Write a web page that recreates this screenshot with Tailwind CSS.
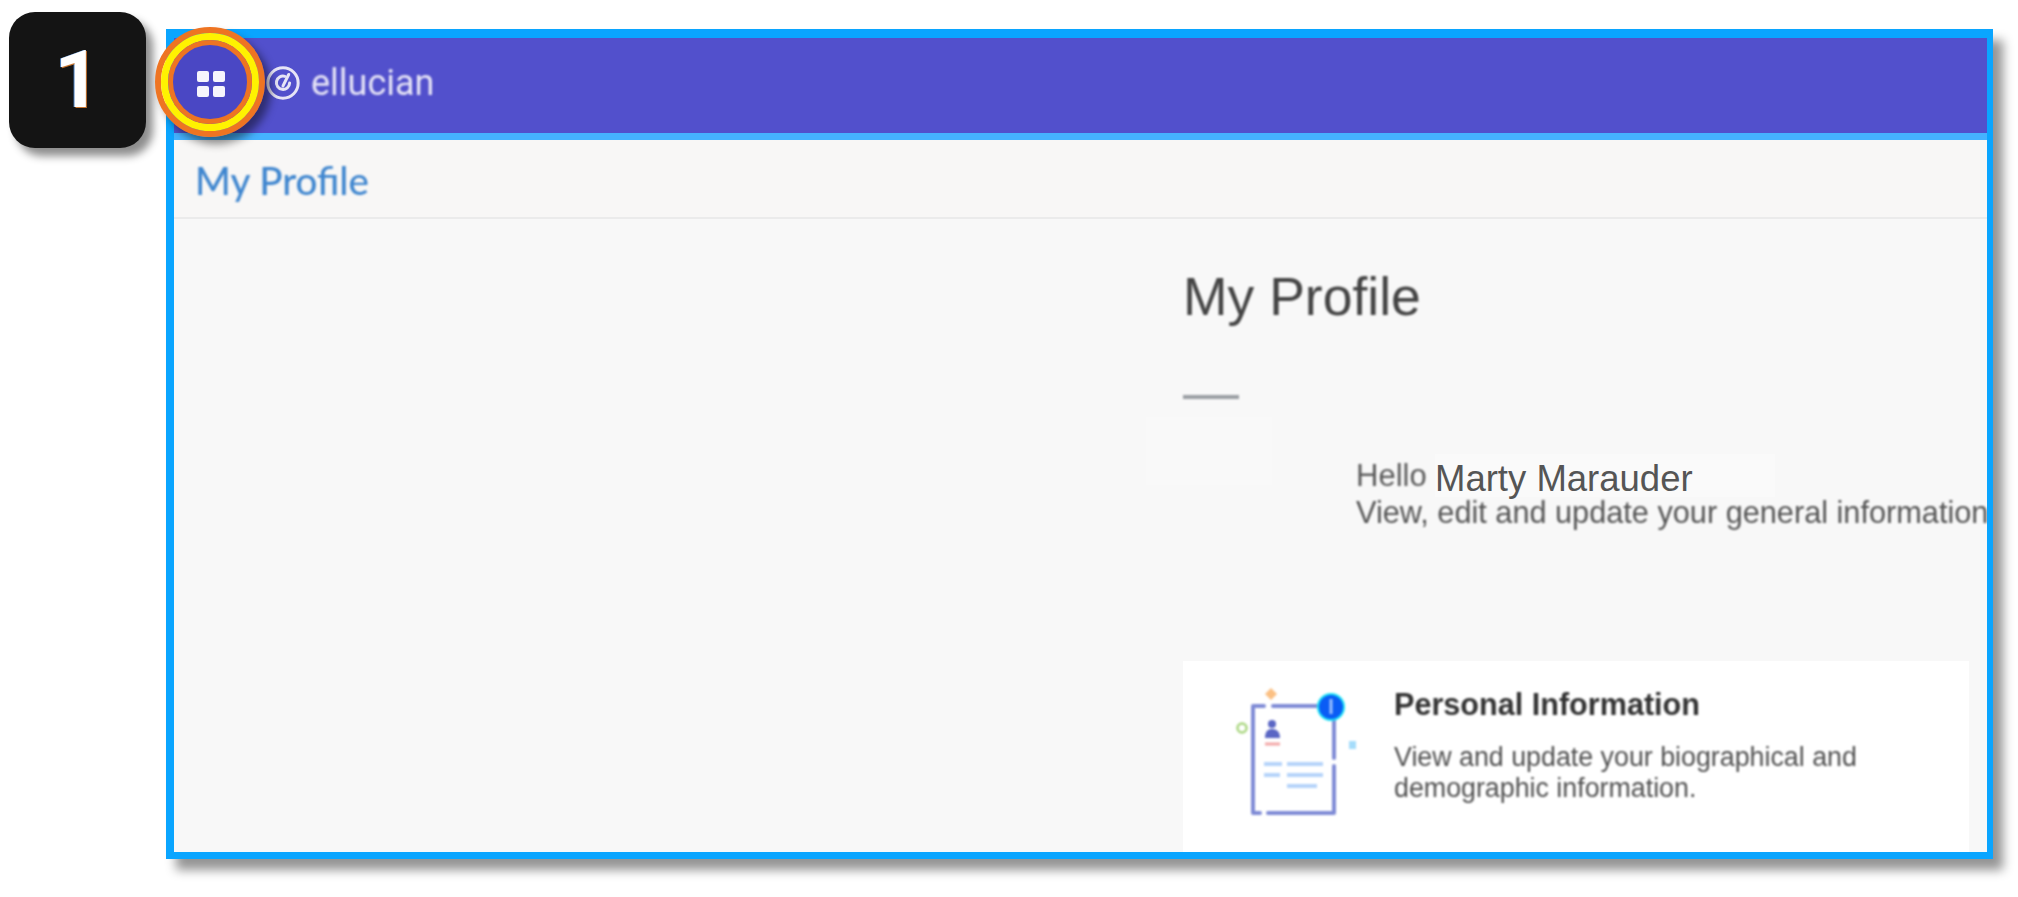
<!DOCTYPE html>
<html lang="en">
<head>
    <meta charset="UTF-8">
    <title>My Profile</title>
    <script src="https://cdn.jsdelivr.net/npm/@tailwindcss/browser@4"></script>
</head>
<body class="relative bg-white h-[897px] pt-[29px] pl-[166px] font-['Liberation_Sans',Arial,sans-serif]">
    <!-- callout number -->
    <div class="absolute left-[9px] top-[12px] w-[137px] h-[136px] rounded-[26px] bg-[#141414] shadow-[7px_8px_9px_rgba(0,0,0,0.45)] flex items-center justify-center z-20">
        <span class="text-white text-[80px] font-bold leading-none font-['Roboto',sans-serif] blur-[0.6px] [text-shadow:1px_1px_0_#c9752f,-1px_0_0_#4a7fc0]">1</span>
    </div>

    <!-- ring around the apps button -->
    <div class="absolute left-[155px] top-[27px] w-[110px] h-[110px] rounded-full border-[6px] border-[#ee7422] shadow-[6px_7px_8px_rgba(0,0,0,0.45)] blur-[0.6px] z-20">
        <div class="w-full h-full rounded-full border-[7px] border-[#fff200]">
            <div class="w-full h-full rounded-full border-[5px] border-[#ee7422] bg-[#4a47c4]"></div>
        </div>
    </div>
    <div class="absolute left-[197px] top-[71px] grid grid-cols-2 gap-x-[4px] gap-y-[4px] blur-[0.7px] z-30">
        <div class="w-[12px] h-[11px] rounded-[2px] bg-white/95"></div>
        <div class="w-[12px] h-[11px] rounded-[2px] bg-white/95"></div>
        <div class="w-[12px] h-[11px] rounded-[2px] bg-white/95"></div>
        <div class="w-[12px] h-[11px] rounded-[2px] bg-white/95"></div>
    </div>

    <!-- screenshot frame -->
    <div class="w-[1827px] h-[830px] shadow-[10px_11px_10px_rgba(0,0,0,0.42)]">
    <div class="w-full h-full flex flex-col overflow-hidden bg-[#f8f8f8] border-t-[9px] border-r-[6px] border-b-[7px] border-l-[8px] border-[#0aa5ff]">
        <header class="h-[95px] shrink-0 bg-[#5250cc] flex items-center pl-[91px] pb-[6px] gap-[10px]">
            <svg class="blur-[0.7px]" width="36" height="36" viewBox="0 0 38 38" fill="none" stroke="#e6e4f6" stroke-width="3.2" stroke-linecap="round">
                <circle cx="19" cy="19" r="16"/>
                <path d="M26 19 A7 7 0 1 1 21 12"/>
                <path d="M25 10 L19 22"/>
            </svg>
            <span class="text-[36px] leading-none text-[#e6e4f6] font-['Roboto',sans-serif] blur-[0.8px]">ellucian</span>
        </header>
        <div class="h-[7px] shrink-0 bg-[#45b2ff]"></div>
        <div class="h-[79px] shrink-0 bg-[#f8f7f6] border-b-2 border-[#ebebeb] flex items-center pl-[21px] pt-[4px]">
            <span class="text-[38.5px] leading-none font-medium text-[#3f86cf] font-['Lato',sans-serif] blur-[0.8px]">My Profile</span>
        </div>
        <main class="relative grow pl-[1009px] pt-[48px] overflow-hidden">
            <div class="absolute left-[972px] top-[198px] w-[126px] h-[68px] bg-[#f9f9f9]"></div>
            <h1 class="text-[53.5px] leading-[60px] text-[#444444] blur-[0.8px]">My Profile</h1>
            <div class="mt-[68px] w-[56px] h-[4px] bg-[#9a9ea3] blur-[0.8px]"></div>
            <div class="relative ml-[173px] mt-[55px] flex items-center h-[43px]">
                <span class="w-[79px] text-[31px] leading-none font-medium text-[#5a5a5a] blur-[0.8px]">Hello</span>
                <span class="w-[340px] h-[43px] bg-[#fafafa] text-[36.5px] leading-[50px] text-[#555555]">Marty Marauder</span>
            </div>
            <p class="ml-[173px] -mt-[1px] text-[30.7px] leading-[34px] whitespace-nowrap text-[#555555] blur-[0.8px]">View, edit and update your general information</p>
            <section class="mt-[131px] w-[786px] h-[193px] bg-white border-b-2 border-[#fbe9e4] flex items-start">
                <svg class="ml-[17px] mt-[10px] shrink-0 blur-[0.9px]" width="177" height="170" viewBox="0 0 177 170" fill="none">
                    <g stroke="#7f8bd6" stroke-width="4" stroke-linecap="round" stroke-linejoin="round">
                        <path d="M64 35 H53 V142 H60"/>
                        <path d="M73 35 H118"/>
                        <path d="M134 45 V87"/>
                        <path d="M134 95 V142 H68"/>
                    </g>
                    <circle cx="131" cy="36" r="13" fill="#0a5cf5" stroke="#19e3f5" stroke-width="2"/>
                    <path d="M131 28 V43" stroke="#9cc0ff" stroke-width="3"/>
                    <path d="M71 17 L77 23 L71 29 L65 23 Z" fill="#fbc083"/>
                    <circle cx="42" cy="57" r="4.5" stroke="#a9d67f" stroke-width="2.5"/>
                    <rect x="149" y="70" width="7" height="8" fill="#a5dcfb"/>
                    <circle cx="72" cy="53" r="4" fill="#5a66c4"/>
                    <path d="M65 67 C65 60 68 58 72 58 C76 58 80 60 80 67 Z" fill="#5a66c4"/>
                    <path d="M65 73 H80" stroke="#f3a7a7" stroke-width="3"/>
                    <g stroke="#b5d4fa" stroke-width="4">
                        <path d="M64 93 H82"/>
                        <path d="M87 93 H123"/>
                        <path d="M64 104 H80"/>
                        <path d="M87 104 H123"/>
                        <path d="M87 115 H117"/>
                    </g>
                </svg>
                <div class="pl-[17px] pt-[27px]">
                    <h2 class="text-[30.6px] leading-[32px] font-bold text-[#333333] blur-[0.8px]">Personal Information</h2>
                    <p class="mt-[22px] w-[500px] text-[26.8px] leading-[31px] text-[#505050] blur-[0.8px]">View and update your biographical and demographic information.</p>
                </div>
            </section>
        </main>
    </div>
    </div>
</body>
</html>
